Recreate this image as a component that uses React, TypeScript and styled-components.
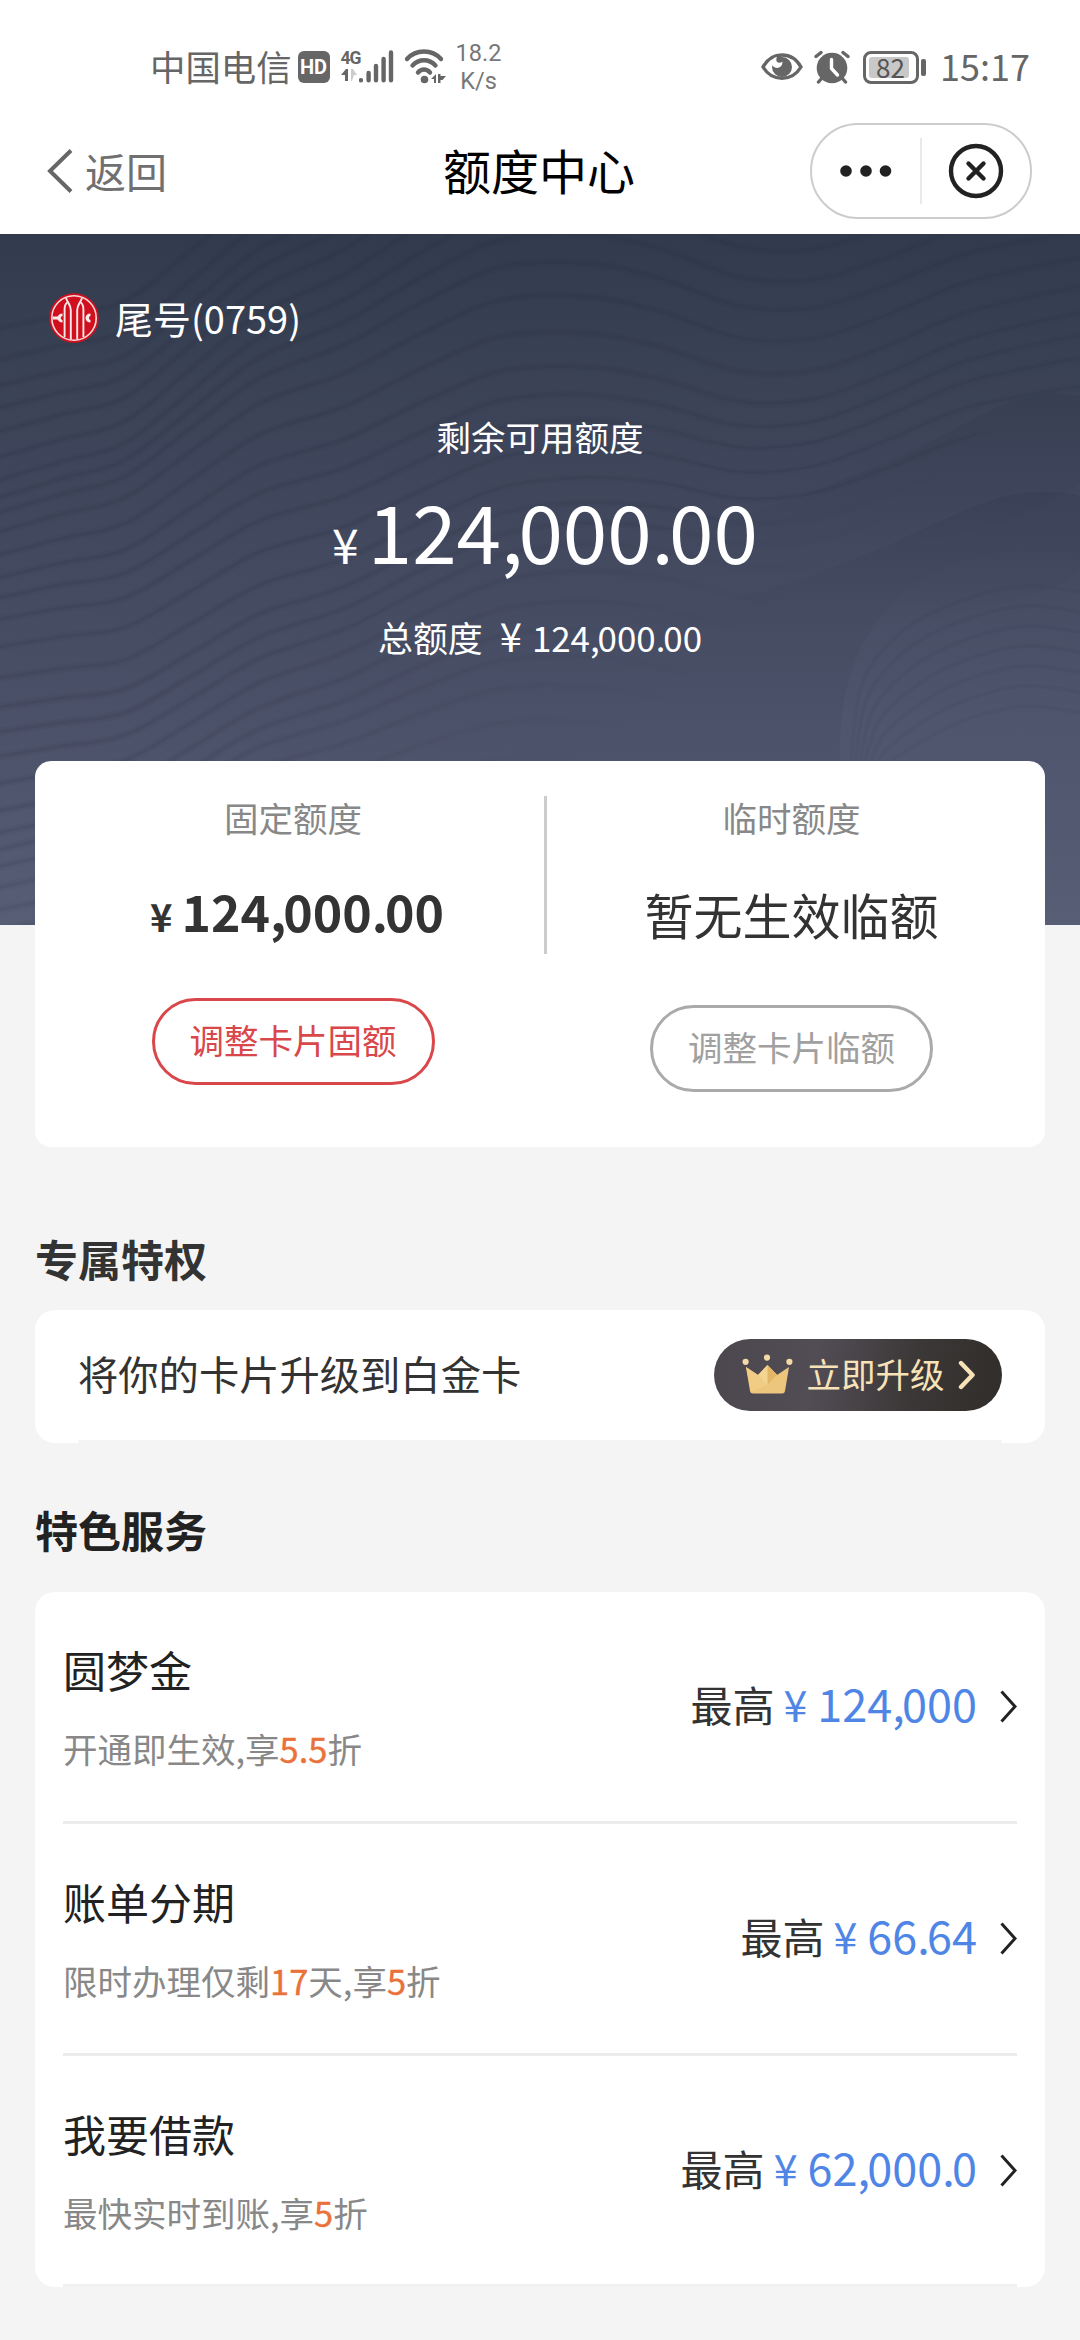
import React from "react";
import styled, { createGlobalStyle } from "styled-components";

const GlobalStyle = createGlobalStyle`
  * { box-sizing: border-box; }
  html, body { margin: 0; padding: 0; background: #f4f4f4; }
  body { font-family: "Noto Sans CJK SC", sans-serif; color: #333; }
`;

const Page = styled.div`
  width: 1080px;
  height: 2340px;
  overflow: hidden;
  display: flex;
  flex-direction: column;
  background: #f4f4f4;
`;

/* ---------- status bar ---------- */

const StatusBar = styled.header`
  height: 112px;
  flex: none;
  padding: 22px 50px 0 150px;
  display: flex;
  align-items: center;
  justify-content: space-between;
  background: #fff;
  color: #666;
`;

const StatusGroup = styled.div`
  display: flex;
  align-items: center;
`;

const Carrier = styled.span`
  font-size: 35.4px;
  line-height: 40px;
  margin-top: -3px;
  margin-right: 6px;
`;

const HdBadge = styled.span`
  width: 32px;
  height: 32px;
  border-radius: 6px;
  background: #666;
  color: #fff;
  font: 700 20px/33px Roboto, sans-serif;
  text-align: center;
  margin-right: 11px;
`;

const NetworkColumn = styled.span`
  display: flex;
  flex-direction: column;
  align-items: flex-start;
  width: 18px;
  height: 36px;
`;

const NetworkType = styled.span`
  font: 700 17.5px/19px Roboto, sans-serif;
  letter-spacing: -1.2px;
`;

const SpeedText = styled.span`
  margin-left: 10px;
  display: flex;
  flex-direction: column;
  align-items: center;
  font: 400 23.5px/28px Roboto, sans-serif;
  color: #777;
`;

const BatteryShell = styled.span`
  width: 56px;
  height: 33px;
  border: 3px solid #666;
  border-radius: 8px;
  padding: 3px;
  display: flex;
  margin-left: 13px;
`;

const BatteryLevel = styled.span`
  width: 40px;
  border-radius: 3px;
  background: #c8c8c8;
  color: #555;
  font-size: 26px;
  line-height: 19px;
  padding-left: 7px;
  white-space: nowrap;
`;

const BatteryNub = styled.span`
  width: 5px;
  height: 17px;
  border-radius: 2px;
  background: #666;
  margin: 0 14px 0 2px;
`;

const Clock = styled.span`
  font-size: 36px;
  line-height: 40px;
  margin-top: -4px;
`;

/* ---------- navigation ---------- */

const NavBar = styled.nav`
  height: 122px;
  flex: none;
  padding: 0 48px 4px 46px;
  display: grid;
  grid-template-columns: 1fr auto 1fr;
  align-items: center;
  background: #fff;
`;

const BackLink = styled.div`
  display: flex;
  align-items: center;
  gap: 11px;
  font-size: 41px;
  line-height: 50px;
  color: #707070;
`;

const BackText = styled.span`
  margin-top: -3px;
`;

const NavTitle = styled.h1`
  margin: -5px 0 0;
  font-size: 48px;
  line-height: 60px;
  font-weight: 400;
  color: #000;
`;

const Capsule = styled.div`
  justify-self: end;
  width: 222px;
  height: 96px;
  border: 2px solid #ccc;
  border-radius: 48px;
  display: flex;
  align-items: center;
`;

const CapsuleHalf = styled.div`
  flex: 1;
  display: flex;
  justify-content: center;
`;

const CapsuleDivider = styled.div`
  width: 2px;
  height: 66px;
  background: #e9e9e9;
`;

/* ---------- hero ---------- */

const Hero = styled.section`
  height: 691px;
  flex: none;
  position: relative;
  padding-top: 59px;
  display: flex;
  flex-direction: column;
  align-items: center;
  color: #fff;
  background: linear-gradient(180deg, #323b4e 0%, #3f465b 34%, #4a5067 68%, #575e76 100%);
`;

const HeroPattern = styled.svg`
  position: absolute;
  inset: 0;
`;

const HeroContent = styled.div`
  position: relative;
  width: 100%;
  display: flex;
  flex-direction: column;
  align-items: center;
`;

const Account = styled.div`
  align-self: flex-start;
  height: 50px;
  margin-left: 49px;
  display: flex;
  align-items: center;
  gap: 16px;
  font-size: 38px;
  line-height: 50px;
`;

const HeroLabel = styled.div`
  margin-top: 69px;
  font-size: 34.5px;
  line-height: 48px;
`;

const HeroAmount = styled.div`
  margin-top: 19px;
  padding-left: 10px;
  display: flex;
  align-items: baseline;
  line-height: 100px;
  font-size: 80px;
`;

const HeroTotal = styled.div`
  margin-top: 34px;
  display: flex;
  align-items: baseline;
  font-size: 34.9px;
  line-height: 48px;
`;

const Yuan = styled.span<{ $size: number; $before?: number; $after: number }>`
  font-size: ${(p) => p.$size}px;
  line-height: 1;
  margin-left: ${(p) => p.$before ?? 0}px;
  margin-right: ${(p) => p.$after}px;
`;

const Separator = styled.span`
  letter-spacing: -0.06em;
`;

/* ---------- cards ---------- */

const Card = styled.section`
  width: 1010px;
  flex: none;
  margin: 0 35px;
  border-radius: 20px;
  background: #fff;
`;

const LimitCard = styled(Card)`
  position: relative;
  height: 386px;
  margin-top: -164px;
  border-radius: 16px;
  display: flex;
`;

const LimitColumn = styled.div<{ $width: number; $shift: number }>`
  flex: none;
  width: ${(p) => p.$width}px;
  padding-top: 32px;
  padding-left: ${(p) => Math.max(p.$shift, 0)}px;
  padding-right: ${(p) => Math.max(-p.$shift, 0)}px;
  display: flex;
  flex-direction: column;
  align-items: center;
`;

const LimitDivider = styled.div`
  width: 3px;
  height: 158px;
  margin-top: 35px;
  background: #ccc;
`;

const LimitLabel = styled.div`
  font-size: 34.5px;
  line-height: 48px;
  color: #888;
`;

const LimitValue = styled.div<{ $top: number; $bold?: boolean }>`
  margin-top: ${(p) => p.$top}px;
  padding-left: ${(p) => (p.$bold ? 8 : 0)}px;
  display: flex;
  align-items: baseline;
  font-size: ${(p) => (p.$bold ? 50 : 49)}px;
  font-weight: ${(p) => (p.$bold ? 700 : 400)};
  line-height: 60px;
  color: #333;
`;

const PillButton = styled.button<{ $top: number; $color: string; $border: string }>`
  margin: ${(p) => p.$top}px 0 0;
  width: 283px;
  height: 87px;
  padding: 0 0 5px;
  border: 3px solid ${(p) => p.$border};
  border-radius: 44px;
  background: #fff;
  color: ${(p) => p.$color};
  font-family: inherit;
  font-size: 34.5px;
  line-height: 48px;
`;

const SectionTitle = styled.h2<{ $top: number; $bottom: number; $color: string }>`
  margin: ${(p) => p.$top}px 35px ${(p) => p.$bottom}px;
  flex: none;
  font-size: 43px;
  line-height: 56px;
  font-weight: 700;
  color: ${(p) => p.$color};
`;

const UpgradeCard = styled(Card)`
  height: 133px;
  padding: 0 43px;
`;

const UpgradeRow = styled.div`
  height: 133px;
  border-bottom: 3px solid #f4f4f4;
  display: flex;
  align-items: center;
  justify-content: space-between;
  font-size: 40.3px;
  line-height: 56px;
`;

const UpgradeText = styled.span`
  margin-top: -4px;
`;

const UpgradeButton = styled.button`
  width: 288px;
  height: 72px;
  margin: 0;
  padding: 0 26px 0 28px;
  border: 0;
  border-radius: 36px;
  background: linear-gradient(100deg, #4b474d 0%, #524d55 35%, #3a3736 70%, #302d2b 100%);
  color: #f8e2b8;
  display: flex;
  align-items: center;
  justify-content: space-between;
  font-family: inherit;
  font-size: 34.5px;
  line-height: 48px;
`;

const UpgradeLabel = styled.span`
  white-space: nowrap;
  margin: -4px 0 0;
`;

const ServiceCard = styled(Card)`
  height: 695px;
  padding: 0 28px;
`;

const ServiceRow = styled.div<{ $last: boolean }>`
  height: ${(p) => (p.$last ? 231 : 232)}px;
  border-bottom: 3px solid ${(p) => (p.$last ? "#f1f1f1" : "#ebebeb")};
  display: flex;
  align-items: center;
`;

const ServiceInfo = styled.div`
  flex: 1;
  align-self: flex-start;
  padding-top: 49px;
`;

const ServiceName = styled.div`
  font-size: 43px;
  line-height: 56px;
  color: #222;
`;

const ServiceNote = styled.div`
  margin-top: 27px;
  font-size: 34.5px;
  line-height: 48px;
  color: #888;
`;

const Highlight = styled.span`
  color: #e9713a;
  -webkit-text-stroke: 0.4px #e9713a;
`;

const ServiceLimit = styled.div`
  display: flex;
  align-items: baseline;
  margin-top: -6px;
  margin-right: 23px;
  line-height: 60px;
  font-size: 42px;
  color: #333;
`;

const ServiceAmount = styled.span`
  display: flex;
  align-items: baseline;
  font-size: 45px;
  color: #4f86e6;
`;

/* ---------- drawings ---------- */

function Digits({ value }: { value: string }) {
  return (
    <span>
      {value.split(/([.,])/).map((part, i) =>
        part === "," || part === "." ? <Separator key={i}>{part}</Separator> : part
      )}
    </span>
  );
}

function smooth(points: number[][]) {
  let d = `M${points[0][0]} ${points[0][1]}`;
  for (let i = 0; i < points.length - 1; i++) {
    const p0 = points[Math.max(i - 1, 0)];
    const p1 = points[i];
    const p2 = points[i + 1];
    const p3 = points[Math.min(i + 2, points.length - 1)];
    d += ` C${p1[0] + (p2[0] - p0[0]) / 6} ${p1[1] + (p2[1] - p0[1]) / 6} ${
      p2[0] - (p3[0] - p1[0]) / 6
    } ${p2[1] - (p3[1] - p1[1]) / 6} ${p2[0]} ${p2[1]}`;
  }
  return d;
}

const waveProfile = [
  [-20, 168], [60, 150], [125, 136], [193, 92], [260, 48], [344, 18], [420, -22],
  [500, -58], [585, -66], [660, -56], [740, -34], [815, -36], [890, -60], [970, -90], [1100, -112],
];

const waves = Array.from({ length: 28 }, (_, k) => {
  const amp = 1.25 - k * 0.022;
  return smooth(
    waveProfile.map(([x, y]) => [
      x,
      -110 + k * 27 + y * amp + Math.sin(k * 0.4 + x / 210) * 12 + Math.sin(k * 1.3) * 3,
    ])
  );
});

const hillRidges = Array.from({ length: 7 }, (_, k) =>
  smooth([
    [850 + k * 4, 540], [862 + k * 6, 450 + k * 12], [905 + k * 8, 395 + k * 16],
    [975 + k * 4, 362 + k * 19], [1035, 352 + k * 20], [1100, 362 + k * 20],
  ])
);

function Pattern() {
  return (
    <HeroPattern width="1080" height="691" viewBox="0 0 1080 691" aria-hidden="true">
      <defs>
        <linearGradient id="ridge" x1="0" y1="0" x2="0" y2="1">
          <stop offset="0" stopColor="#2c3348" stopOpacity="0.22" />
          <stop offset="1" stopColor="#2c3348" stopOpacity="0" />
        </linearGradient>
        <linearGradient id="hill" x1="0" y1="0" x2="0" y2="1">
          <stop offset="0" stopColor="#626a88" stopOpacity="0" />
          <stop offset="0.45" stopColor="#626a88" stopOpacity="0.16" />
          <stop offset="1" stopColor="#626a88" stopOpacity="0" />
        </linearGradient>
        <linearGradient id="fade" gradientUnits="userSpaceOnUse" x1="520" y1="170" x2="720" y2="420">
          <stop offset="0" stopColor="#fff" />
          <stop offset="1" stopColor="#000" />
        </linearGradient>
        <mask id="waveMask">
          <rect width="1080" height="691" fill="url(#fade)" />
          <path d="M560 0 H1080 V170 C980 190 900 240 800 270 C720 290 640 300 560 310 Z" fill="#fff" opacity="0.8" />
        </mask>
      </defs>
      <g fill="none" stroke="#262d42" mask="url(#waveMask)">
        {waves.map((d, i) => (
          <g key={i}>
            <path d={d} strokeWidth="8" opacity="0.05" />
            <path d={d} strokeWidth="3" opacity="0.11" />
          </g>
        ))}
      </g>
      <path
        d="M1080 162 C1010 150 965 195 900 222 C820 255 740 285 660 310 C780 330 980 320 1080 250 Z"
        fill="url(#ridge)"
      />
      <path
        d="M1080 262 C1010 245 960 280 890 310 C800 350 700 380 580 392 C740 410 980 400 1080 340 Z"
        fill="url(#ridge)"
      />
      <path
        d="M842 560 C830 440 870 370 940 335 C990 315 1040 310 1080 320 V691 H880 C850 650 846 610 842 560 Z"
        fill="url(#hill)"
      />
      <g fill="none" stroke="#2b3145" strokeWidth="4" opacity="0.07">
        {hillRidges.map((d, i) => (
          <path key={i} d={d} />
        ))}
      </g>
    </HeroPattern>
  );
}

function SignalIcon() {
  return (
    <>
      <NetworkColumn>
        <NetworkType>4G</NetworkType>
        <svg width="18" height="14" viewBox="0 0 18 14">
          <path d="M0 7 L5 1 H7 V13 H4 V7 Z" fill="#666" />
          <path d="M10 1 H12 L16 7 H13 L11 13 H10 Z" fill="#ccc" />
        </svg>
      </NetworkColumn>
      <svg width="36" height="36" viewBox="18 0 36 36">
        <path
          d="M20 31.2v0.1M27.6 24v7.3M35 17v14.3M42.6 10v21.3M50 3.5v27.8"
          stroke="#666"
          strokeWidth="4.4"
          strokeLinecap="round"
        />
      </svg>
    </>
  );
}

function WifiIcon() {
  return (
    <svg width="51" height="36" viewBox="-9 0 51 36">
      <g fill="none" stroke="#666" strokeWidth="4.4" strokeLinecap="round">
        <path d="M3 10 C12 0 28 0 37 10" />
        <path d="M8.5 16.5 C15 9.5 25 9.5 31.5 16.5" />
        <path d="M14 23.5 C17.5 19.5 22.5 19.5 26 23.5" />
      </g>
      <circle cx="20.5" cy="30.5" r="3.8" fill="#666" />
      <path d="M27 30 L32 25 V34 H30 V30 Z M34 25 V34 H36.5 V31 H38.500 L42 27 H36.5 V25 Z" fill="#666" />
    </svg>
  );
}

function EyeIcon() {
  return (
    <svg width="42" height="30" viewBox="0 0 42 30">
      <path d="M2 15 C11 -1 31 -1 40 15 C31 30 11 30 2 15 Z" fill="none" stroke="#666" strokeWidth="3.4" />
      <circle cx="21" cy="15" r="10" fill="#666" />
      <circle cx="16" cy="10.500" r="5.400" fill="#fff" />
      <circle cx="18.5" cy="7.500" r="3.200" fill="#666" />
    </svg>
  );
}

function AlarmIcon() {
  return (
    <svg width="47" height="34" viewBox="-11 0 47 34">
      <circle cx="18" cy="18" r="15.3" fill="#666" />
      <path d="M7.5 1 L0 8 M28.5 1 L36 8" stroke="#fff" strokeWidth="8" />
      <path d="M2 6.5 L7 2.5 M34 6.5 L29 2.5 M8 28 L4.5 32 M28 28 L31.5 32" stroke="#666" strokeWidth="3.4" strokeLinecap="round" />
      <path d="M17.5 9.5 V18.5 L23.5 25" fill="none" stroke="#fff" strokeWidth="3.4" strokeLinecap="round" strokeLinejoin="round" />
    </svg>
  );
}

function BankLogo() {
  return (
    <svg width="50" height="50" viewBox="0 0 50 50">
      <circle cx="25" cy="25" r="24.8" fill="#d0101e" />
      <circle cx="25" cy="25" r="22.2" fill="none" stroke="#f8dcdc" strokeWidth="1.6" />
      <g fill="none" stroke="#fbe9e9" strokeWidth="1.9">
        <path d="M17 5 C18.500 10 21.800 11.500 21.800 17 V46.500" />
        <path d="M33 5 C31.500 10 28.200 11.500 28.200 17 V46.500" />
        <path d="M15.600 44 V16.500 C15.600 12.500 16.600 10.500 18.300 9.500" />
        <path d="M34.400 44 V16.500 C34.400 12.500 33.400 10.500 31.700 9.500" />
      </g>
      <g fill="#fbe9e9">
        <path d="M13.500 20.500 C10.500 20.500 9.500 22 8.500 23.500 H3.500 V26.500 H8.500 C9.500 28 10.500 29.500 13.500 29.500 V27 C11.300 26.500 11.300 23.500 13.500 23 Z" />
        <path d="M41.500 20.500 C38.500 20.500 36.500 22.500 36.500 25 C36.500 27.500 38.500 29.500 41.500 29.500 V27 C39.500 26.500 39.500 23.500 41.500 23 Z" />
      </g>
    </svg>
  );
}

function CrownIcon() {
  return (
    <svg width="51" height="42" viewBox="0 0 51 42">
      <path d="M4 13 L16 21 L25.5 11 L35 21 L47 13 L43 37 Q42.7 39.5 40 39.5 H11 Q8.3 39.5 8 37 Z" fill="#ecc67c" />
      <path d="M25.5 11 L35 21 L25.5 31 L16 21 Z" fill="#f3d490" />
      <path d="M25.5 11 L35 21 L25.5 31 Z" fill="#e3b566" />
      <path d="M4 13 L16 21 L25.5 31 L9 38 Z" fill="#f0cc84" />
      <circle cx="3.6" cy="7.8" r="3.1" fill="#f3dba6" />
      <circle cx="25" cy="3.6" r="3.1" fill="#f3dba6" />
      <circle cx="47.4" cy="7.8" r="3.1" fill="#f3dba6" />
    </svg>
  );
}

function Arrow() {
  return (
    <svg width="17" height="33" viewBox="0 0 17 33">
      <path d="M1.5 1.5 L15 16.5 L1.5 31.5" fill="none" stroke="#222" strokeWidth="3" />
    </svg>
  );
}

/* ---------- page ---------- */

type NotePart = string | { mark: string };

const services: { name: string; note: NotePart[]; amount: string }[] = [
  { name: "圆梦金", note: ["开通即生效,享", { mark: "5.5" }, "折"], amount: "124,000" },
  { name: "账单分期", note: ["限时办理仅剩", { mark: "17" }, "天,享", { mark: "5" }, "折"], amount: "66.64" },
  { name: "我要借款", note: ["最快实时到账,享", { mark: "5" }, "折"], amount: "62,000.0" },
];

export default function App() {
  return (
    <Page>
      <GlobalStyle />
      <StatusBar>
        <StatusGroup>
          <Carrier>中国电信</Carrier>
          <HdBadge>HD</HdBadge>
          <SignalIcon />
          <WifiIcon />
          <SpeedText>
            <span>18.2</span>
            <span>K/s</span>
          </SpeedText>
        </StatusGroup>
        <StatusGroup>
          <EyeIcon />
          <AlarmIcon />
          <BatteryShell>
            <BatteryLevel>82</BatteryLevel>
          </BatteryShell>
          <BatteryNub />
          <Clock>15:17</Clock>
        </StatusGroup>
      </StatusBar>

      <NavBar>
        <BackLink>
          <svg width="28" height="44" viewBox="0 0 28 44">
            <path d="M25 1.5 L4 22 L25 42.5" fill="none" stroke="#666" strokeWidth="4" />
          </svg>
          <BackText>返回</BackText>
        </BackLink>
        <NavTitle>额度中心</NavTitle>
        <Capsule>
          <CapsuleHalf>
            <svg width="52" height="12" viewBox="0 0 52 12">
              <circle cx="6" cy="6" r="5.8" fill="#222" />
              <circle cx="26" cy="6" r="5.8" fill="#222" />
              <circle cx="45.5" cy="6" r="5.8" fill="#222" />
            </svg>
          </CapsuleHalf>
          <CapsuleDivider />
          <CapsuleHalf>
            <svg width="56" height="56" viewBox="0 0 56 56">
              <circle cx="28" cy="28" r="25" fill="none" stroke="#222" strokeWidth="4.4" />
              <path d="M20.5 20.5 L35.5 35.5 M35.5 20.5 L20.5 35.5" stroke="#222" strokeWidth="4.4" strokeLinecap="round" />
            </svg>
          </CapsuleHalf>
        </Capsule>
      </NavBar>

      <Hero>
        <Pattern />
        <HeroContent>
          <Account>
            <BankLogo />
            <span>尾号(0759)</span>
          </Account>
          <HeroLabel>剩余可用额度</HeroLabel>
          <HeroAmount>
            <Yuan $size={48} $after={9}>¥</Yuan>
            <Digits value="124,000.00" />
          </HeroAmount>
          <HeroTotal>
            总额度
            <Yuan $size={40} $before={17} $after={10}>¥</Yuan>
            <Digits value="124,000.00" />
          </HeroTotal>
        </HeroContent>
      </Hero>

      <LimitCard>
        <LimitColumn $width={509} $shift={7}>
          <LimitLabel>固定额度</LimitLabel>
          <LimitValue $top={39} $bold>
            <Yuan $size={38} $after={9}>¥</Yuan>
            <Digits value="124,000.00" />
          </LimitValue>
          <PillButton $top={58} $color="#d9474a" $border="#d9474a">调整卡片固额</PillButton>
        </LimitColumn>
        <LimitDivider />
        <LimitColumn $width={498} $shift={-9}>
          <LimitLabel>临时额度</LimitLabel>
          <LimitValue $top={43}>暂无生效临额</LimitValue>
          <PillButton $top={61} $color="#a0a0a0" $border="#aaa">调整卡片临额</PillButton>
        </LimitColumn>
      </LimitCard>

      <SectionTitle $top={83} $bottom={24} $color="#333">专属特权</SectionTitle>
      <UpgradeCard>
        <UpgradeRow>
          <UpgradeText>将你的卡片升级到白金卡</UpgradeText>
          <UpgradeButton>
            <CrownIcon />
            <UpgradeLabel>立即升级</UpgradeLabel>
            <svg width="18" height="30" viewBox="0 0 18 30">
              <path d="M3 3 L14.5 15 L3 27" fill="none" stroke="#f8e2b8" strokeWidth="4.4" strokeLinecap="round" strokeLinejoin="round" />
            </svg>
          </UpgradeButton>
        </UpgradeRow>
      </UpgradeCard>

      <SectionTitle $top={58} $bottom={35} $color="#222">特色服务</SectionTitle>
      <ServiceCard>
        {services.map((s, i) => (
          <ServiceRow key={s.name} $last={i === services.length - 1}>
            <ServiceInfo>
              <ServiceName>{s.name}</ServiceName>
              <ServiceNote>
                {s.note.map((part, j) =>
                  typeof part === "string" ? part : <Highlight key={j}>{part.mark}</Highlight>
                )}
              </ServiceNote>
            </ServiceInfo>
            <ServiceLimit>
              最高
              <ServiceAmount>
                <Yuan $size={43} $before={9} $after={10}>¥</Yuan>
                <Digits value={s.amount} />
              </ServiceAmount>
            </ServiceLimit>
            <Arrow />
          </ServiceRow>
        ))}
      </ServiceCard>
    </Page>
  );
}
